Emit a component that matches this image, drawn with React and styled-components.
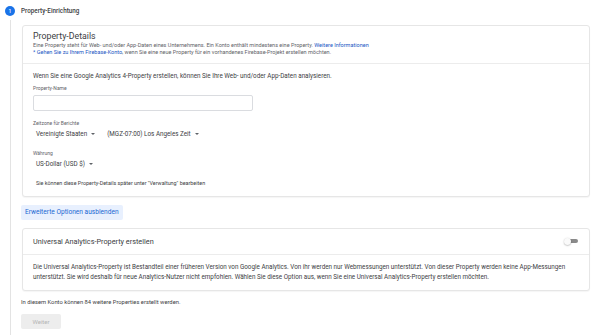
import React from "react";
import styled, { createGlobalStyle } from "styled-components";

const Global = createGlobalStyle`
  html, body { margin: 0; padding: 0; background: #ffffff; }
  body { font-family: Roboto, "Liberation Sans", Arial, sans-serif; color: #202124; }
  * { box-sizing: border-box; }
`;

const Page = styled.div`
  width: 605px;
  height: 336px;
  overflow: hidden;
  padding: 0 15px 0 5px;
`;

const StepHeader = styled.div`
  display: flex;
  align-items: center;
  height: 22px;
  gap: 6px;
`;

const StepCircle = styled.div`
  width: 10px;
  height: 10px;
  border-radius: 50%;
  background: #1a73e8;
  color: #fff;
  font-size: 5px;
  font-weight: 500;
  display: flex;
  align-items: center;
  justify-content: center;
`;

const StepTitle = styled.div`
  font-size: 6.3px;
  font-weight: 500;
  color: #3c4043;
`;

const StepBody = styled.div`
  margin-left: 5px;
  border-left: 1px solid #e3e3e3;
  padding: 5px 0 6px 11px;
  margin-top: -2px;
`;

const Card = styled.div`
  border: 1px solid #e6e6e6;
  border-radius: 3px;
  box-shadow: 0 1px 1px rgba(0, 0, 0, 0.04);
  background: #fff;
  margin-top: ${(p) => p.$mt || 0}px;
`;

const CardHeader = styled.div`
  padding: ${(p) => p.$pad};
  border-bottom: 1px solid #ececec;
  display: flex;
  align-items: center;
  justify-content: space-between;
`;

const HeaderText = styled.div`
  display: flex;
  flex-direction: column;
`;

const CardTitle = styled.div`
  font-size: ${(p) => p.$size}px;
  line-height: 11px;
  color: #3c4043;
`;

const Desc = styled.div`
  font-size: 5.5px;
  line-height: 7px;
  color: #5f6368;
  white-space: nowrap;
`;

const Link = styled.span`
  color: #1a56c4;
`;

const CardBody = styled.div`
  padding: ${(p) => p.$pad};
  display: flex;
  flex-direction: column;
  align-items: flex-start;
`;

const BodyText = styled.div`
  font-size: 6.3px;
  line-height: ${(p) => p.$lh || 8}px;
  color: #3c4043;
  white-space: nowrap;
`;

const Label = styled.div`
  font-size: 5px;
  line-height: 7px;
  color: #5f6368;
  margin-top: ${(p) => p.$mt}px;
`;

const Input = styled.div`
  width: 220px;
  height: 16px;
  border: 1px solid #dadce0;
  border-radius: 2px;
  margin-top: 3px;
`;

const SelectRow = styled.div`
  display: flex;
  gap: 12px;
  margin-top: 3.5px;
  padding-left: 3px;
`;

const Select = styled.div`
  display: flex;
  align-items: center;
  gap: 4px;
  font-size: 6.3px;
  line-height: 8px;
  color: #3c4043;
  white-space: nowrap;
`;

const Caret = styled.span`
  width: 0;
  height: 0;
  border-left: 2px solid transparent;
  border-right: 2px solid transparent;
  border-top: 2px solid #5f6368;
`;

const Note = styled.div`
  font-size: 5.4px;
  line-height: 7px;
  color: #3c4043;
  margin-top: 11.5px;
  padding-left: 3px;
  white-space: nowrap;
`;

const TonalButton = styled.div`
  display: inline-flex;
  align-items: center;
  height: 15px;
  padding: 0 4px;
  margin-top: 8px;
  margin-left: -1px;
  border-radius: 2px;
  background: #e8f0fe;
  color: #1967d2;
  font-size: 6.6px;
  white-space: nowrap;
`;

const Toggle = styled.div`
  position: relative;
  width: 14px;
  height: 7px;
  margin-right: 1px;
`;

const Track = styled.div`
  position: absolute;
  left: 2px;
  right: 0;
  top: 1.5px;
  height: 4px;
  border-radius: 2px;
  background: #8a8a8a;
`;

const Thumb = styled.div`
  position: absolute;
  left: 0;
  top: 0;
  width: 7px;
  height: 7px;
  border-radius: 50%;
  background: #fafafa;
  box-shadow: 0 0.5px 1.5px rgba(0, 0, 0, 0.35);
`;

const Footer = styled.div`
  font-size: 5.8px;
  line-height: 7px;
  color: #3c4043;
  margin-top: 8px;
  margin-left: -1px;
  white-space: nowrap;
`;

const DisabledButton = styled.div`
  display: inline-flex;
  align-items: center;
  justify-content: center;
  width: 40px;
  height: 15px;
  margin-top: 8px;
  margin-left: -1px;
  border-radius: 2px;
  background: #ededed;
  color: #b5b5b5;
  font-size: 6px;
`;

const Column = styled.div`
  display: flex;
  flex-direction: column;
  align-items: flex-start;
`;

const Full = styled.div`
  align-self: stretch;
`;

export default function App() {
  return (
    <>
      <Global />
      <Page>
        <StepHeader>
          <StepCircle>1</StepCircle>
          <StepTitle>Property-Einrichtung</StepTitle>
        </StepHeader>
        <StepBody>
          <Column>
            <Full>
              <Card>
                <CardHeader $pad="5px 10px 7px">
                  <HeaderText>
                    <CardTitle $size={8.8}>Property-Details</CardTitle>
                    <Desc>
                      Eine Property steht für Web- und/oder App-Daten eines Unternehmens. Ein Konto enthält mindestens eine Property.{" "}
                      <Link>Weitere Informationen</Link>
                    </Desc>
                    <Desc>
                      <Link>* Gehen Sie zu Ihrem Firebase-Konto</Link>, wenn Sie eine neue Property für ein vorhandenes Firebase-Projekt erstellen möchten.
                    </Desc>
                  </HeaderText>
                </CardHeader>
                <CardBody $pad="8px 10px 9px">
                  <BodyText>
                    Wenn Sie eine Google Analytics 4-Property erstellen, können Sie Ihre Web- und/oder App-Daten analysieren.
                  </BodyText>
                  <Label $mt={5}>Property-Name</Label>
                  <Input />
                  <Label $mt={8.5}>Zeitzone für Berichte</Label>
                  <SelectRow>
                    <Select>
                      Vereinigte Staaten <Caret />
                    </Select>
                    <Select>
                      (MGZ-07:00) Los Angeles Zeit <Caret />
                    </Select>
                  </SelectRow>
                  <Label $mt={11.5}>Währung</Label>
                  <SelectRow>
                    <Select>
                      US-Dollar (USD $) <Caret />
                    </Select>
                  </SelectRow>
                  <Note>Sie können diese Property-Details später unter "Verwaltung" bearbeiten</Note>
                </CardBody>
              </Card>
            </Full>
            <TonalButton>Erweiterte Optionen ausblenden</TonalButton>
            <Full>
              <Card $mt={8}>
                <CardHeader $pad="7px 10px 7px">
                  <CardTitle $size={7.3}>Universal Analytics-Property erstellen</CardTitle>
                  <Toggle>
                    <Track />
                    <Thumb />
                  </Toggle>
                </CardHeader>
                <CardBody $pad="7px 10px 7px">
                  <BodyText $lh={10.5}>
                    Die Universal Analytics-Property ist Bestandteil einer früheren Version von Google Analytics. Von ihr werden nur Webmessungen unterstützt. Von dieser Property werden keine App-Messungen
                  </BodyText>
                  <BodyText $lh={10.5}>
                    unterstützt. Sie wird deshalb für neue Analytics-Nutzer nicht empfohlen. Wählen Sie diese Option aus, wenn Sie eine Universal Analytics-Property erstellen möchten.
                  </BodyText>
                </CardBody>
              </Card>
            </Full>
            <Footer>In diesem Konto können 84 weitere Properties erstellt werden.</Footer>
            <DisabledButton>Weiter</DisabledButton>
          </Column>
        </StepBody>
      </Page>
    </>
  );
}
